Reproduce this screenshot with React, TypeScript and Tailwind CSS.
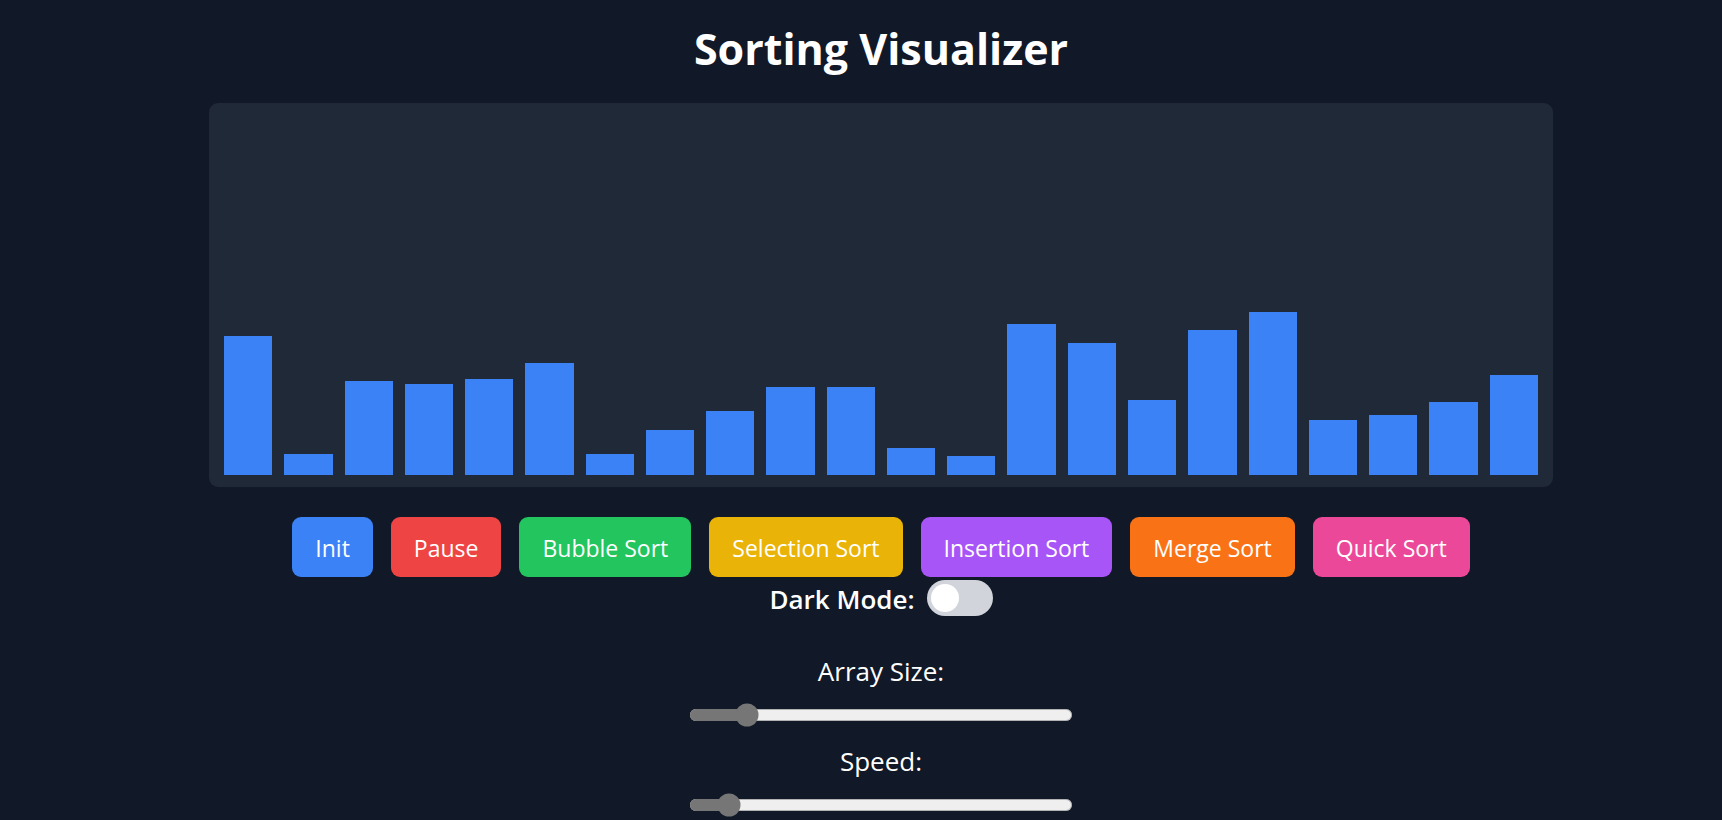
import { useState } from "react";

const INITIAL = [
  139, 21, 94, 91, 96, 112, 21, 45, 64, 88, 88, 27, 19, 151, 132, 75, 145, 163,
  55, 60, 73, 100,
];

const ALGORITHMS = [
  { name: "Bubble Sort", color: "bg-[#22c55e]" },
  { name: "Selection Sort", color: "bg-[#eab308]" },
  { name: "Insertion Sort", color: "bg-[#a855f7]" },
  { name: "Merge Sort", color: "bg-[#f97316]" },
  { name: "Quick Sort", color: "bg-[#ec4899]" },
];

const buttonClass =
  "h-[60px] rounded-[9px] px-[23px] pt-0.5 text-[23px] leading-9 text-white cursor-pointer";

function randomBars(size: number) {
  return Array.from({ length: size }, () => 15 + Math.floor(Math.random() * 150));
}

type RangeProps = {
  id: string;
  label: string;
  min: number;
  max: number;
  value: number;
  onChange: (value: number) => void;
};

function Range({ id, label, min, max, value, onChange }: RangeProps) {
  return (
    <div className="flex flex-col items-center gap-3">
      <label htmlFor={id} className="text-[26px] leading-10">
        {label}
      </label>
      <input
        id={id}
        type="range"
        min={min}
        max={max}
        value={value}
        onChange={(e) => onChange(Number(e.target.value))}
        className="h-4 w-64 accent-[#767676] [zoom:1.5]"
      />
    </div>
  );
}

export default function App() {
  const [bars, setBars] = useState(INITIAL);
  const [speed, setSpeed] = useState(78);
  const [light, setLight] = useState(false);

  return (
    <main
      className={`flex min-h-screen flex-col items-center pt-6 pl-10 font-['Open_Sans',sans-serif] ${
        light ? "bg-white text-gray-900" : "bg-[#111827] text-white"
      }`}
    >
      <h1 className="text-[43px] leading-[50px] font-bold">Sorting Visualizer</h1>

      <section
        aria-label="Array"
        className={`mt-[29px] flex h-96 w-full max-w-[1344px] items-end gap-3 rounded-[9px] px-[15px] pb-3 ${
          light ? "bg-gray-200" : "bg-[#1f2937]"
        }`}
      >
        {bars.map((height, i) => (
          <div key={i} className="flex-1 bg-[#3b82f6]" style={{ height }} />
        ))}
      </section>

      <div className="mt-[30px] flex flex-wrap justify-center gap-[18px]">
        <button
          type="button"
          className={`${buttonClass} bg-[#3b82f6]`}
          onClick={() => setBars(randomBars(bars.length))}
        >
          Init
        </button>
        <button type="button" className={`${buttonClass} bg-[#ef4444]`}>
          Pause
        </button>
        {ALGORITHMS.map(({ name, color }) => (
          <button
            key={name}
            type="button"
            className={`${buttonClass} ${color}`}
            onClick={() => setBars([...bars].sort((a, b) => a - b))}
          >
            {name}
          </button>
        ))}
      </div>

      <label className="mt-[3px] flex items-center gap-3 text-[26px] leading-9 font-semibold">
        <span className="pt-0.5 leading-[34px]">Dark Mode:</span>
        <input
          type="checkbox"
          className="peer sr-only"
          checked={light}
          onChange={(e) => setLight(e.target.checked)}
        />
        <span className="flex h-9 w-[66px] items-center rounded-full bg-[#d1d5db] p-1 peer-checked:justify-end peer-checked:bg-[#3b82f6]">
          <span className="size-7 rounded-full bg-white" />
        </span>
      </label>

      <div className="mt-[35px] flex flex-col gap-[14px]">
        <Range
          id="array-size"
          label="Array Size:"
          min={10}
          max={104}
          value={bars.length}
          onChange={(size) => setBars(randomBars(size))}
        />
        <Range
          id="speed"
          label="Speed:"
          min={0}
          max={1000}
          value={speed}
          onChange={setSpeed}
        />
      </div>
    </main>
  );
}
